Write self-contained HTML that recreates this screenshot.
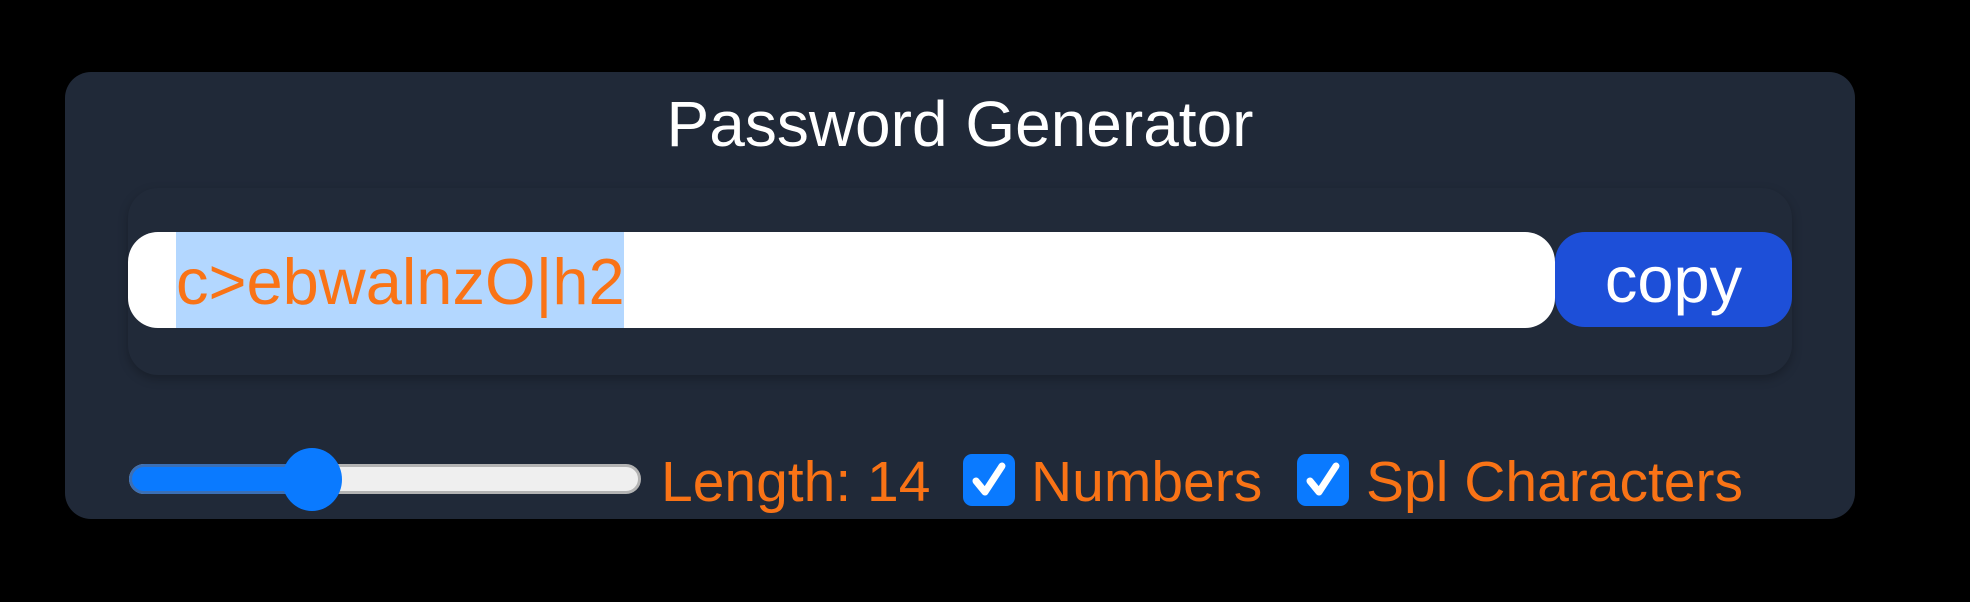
<!DOCTYPE html>
<html><head><style>
body{margin:0;width:1970px;height:602px;background:#000;position:relative;overflow:hidden;font-family:"Liberation Sans",Arial,sans-serif}
.a{position:absolute}
.card{left:65px;top:72px;width:1790px;height:447px;background:#202938;border-radius:26px}
.title{left:0;width:1920px;top:88px;text-align:center;color:#fff;font-size:64px;line-height:72px}
.inner{left:128px;top:188px;width:1664px;height:187px;border-radius:30px;background:#212a39;box-shadow:0 4px 10px rgba(0,0,0,.25)}
.input{left:128px;top:232px;width:1427px;height:96px;background:#fff;border-radius:30px;overflow:hidden}
.sel{left:48px;top:0;width:448px;height:96px;background:#b3d7ff;color:#f97316;font-size:65px;line-height:100px;white-space:nowrap;overflow:hidden}
.btn{left:1555px;top:232px;width:237px;height:95px;background:#1d4fd8;border-radius:30px;color:#fff;font-size:65px;line-height:96px;text-align:center}
.track{left:129px;top:464px;width:512px;height:30px;border-radius:16px;background:#efefef;border:3px solid #b3b3b3;box-sizing:border-box}
.fill{left:129px;top:464px;width:180px;height:30px;border-radius:16px 0 0 16px;background:#0a7aff;border:3px solid #3a6fb6;border-right:0;box-sizing:border-box}
.thumb{left:282px;top:448px;width:60px;height:63px;border-radius:50%;background:#0a7aff}
.lbl{color:#f97316;font-size:57px;line-height:60px;top:452px;white-space:nowrap}
.cb{width:52px;height:52px;border-radius:9px;background:#0a7aff;top:454px}
</style></head><body>
<div class="a card"></div>
<div class="a title">Password Generator</div>
<div class="a inner"></div>
<div class="a input"><div class="a sel">c&gt;ebwalnzO|h2</div></div>
<div class="a btn">copy</div>
<div class="a track"></div>
<div class="a fill"></div>
<div class="a thumb"></div>
<div class="a lbl" style="left:661px">Length: 14</div>
<div class="a cb" style="left:963px"><svg width="52" height="52" viewBox="0 0 52 52"><path d="M13 27 L22 38 L39 12" stroke="#fff" stroke-width="7" fill="none" stroke-linecap="round" stroke-linejoin="round"/></svg></div>
<div class="a lbl" style="left:1031px">Numbers</div>
<div class="a cb" style="left:1297px"><svg width="52" height="52" viewBox="0 0 52 52"><path d="M13 27 L22 38 L39 12" stroke="#fff" stroke-width="7" fill="none" stroke-linecap="round" stroke-linejoin="round"/></svg></div>
<div class="a lbl" style="left:1366px">Spl Characters</div>
</body></html>
